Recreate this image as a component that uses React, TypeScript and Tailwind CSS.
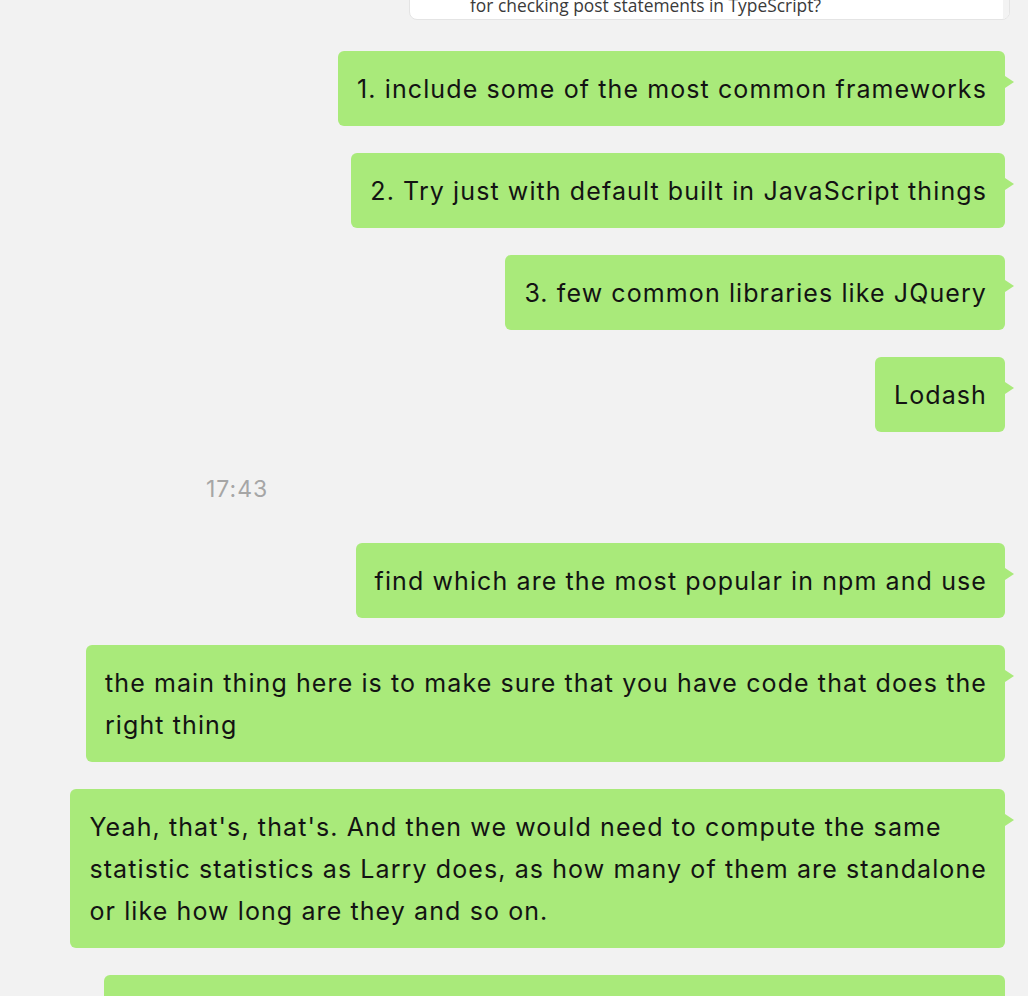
import React from "react"

type Msg = { lines: string[] }

const messages: Msg[] = [
  { lines: ["1. include some of the most common frameworks"] },
  { lines: ["2. Try just with default built in JavaScript things"] },
  { lines: ["3. few common libraries like JQuery"] },
  { lines: ["Lodash"] },
]

const later: Msg[] = [
  { lines: ["find which are the most popular in npm and use"] },
  { lines: ["the main thing here is to make sure that you have code that does the", "right thing"] },
  {
    lines: [
      "Yeah, that's, that's. And then we would need to compute the same",
      "statistic statistics as Larry does, as how many of them are standalone",
      "or like how long are they and so on.",
    ],
  },
]

function Bubble({ lines }: Msg) {
  return (
    <div className="relative rounded-[6px] bg-[#a9ea7a] pl-[19px] pr-[18px] pt-[17px] pb-[16px] text-[25px] leading-[42px] tracking-[1.1px] text-[#131313] whitespace-nowrap">
      {lines.map((l, i) => (
        <div key={i}>{l}</div>
      ))}
      {/* tail */}
      <div className="absolute right-[-9px] top-[25px] h-0 w-0 border-y-[6px] border-l-[9px] border-y-transparent border-l-[#a9ea7a]" />
    </div>
  )
}

export default function App() {
  return (
    <div className="h-[996px] w-full overflow-hidden bg-[#f2f2f2] font-['Inter','Noto_Sans',sans-serif]">
      {/* quoted card, scrolled mostly off the top */}
      <div className="pl-[409px] pr-[18px]">
        <div className="-mt-[41px] flex h-[61px] overflow-hidden rounded-b-[8px] border border-[#e4e4e4] bg-white">
          <div className="flex flex-1 items-end pl-[60px] pb-[2px]">
            <span className="text-[17.4px] leading-[24px] text-[#3a3a3a] font-['Open_Sans','Noto_Sans',sans-serif]">
              for checking post statements in TypeScript?
            </span>
          </div>
          <div className="w-[6px] bg-[#f3f3f3]" />
        </div>
      </div>

      <div className="mt-[31px] flex flex-col items-end gap-[27px] pr-[23px]">
        {messages.map((m, i) => (
          <Bubble key={i} lines={m.lines} />
        ))}

        <div className="mt-[15px] mb-[12px] self-start pl-[206px] text-[23px] leading-[30px] tracking-[1px] text-[#a6a6a6]">
          17:43
        </div>

        {later.map((m, i) => (
          <Bubble key={i} lines={m.lines} />
        ))}

        <div className="h-[120px] w-[901px] rounded-[6px] bg-[#a9ea7a]" />
      </div>
    </div>
  )
}
